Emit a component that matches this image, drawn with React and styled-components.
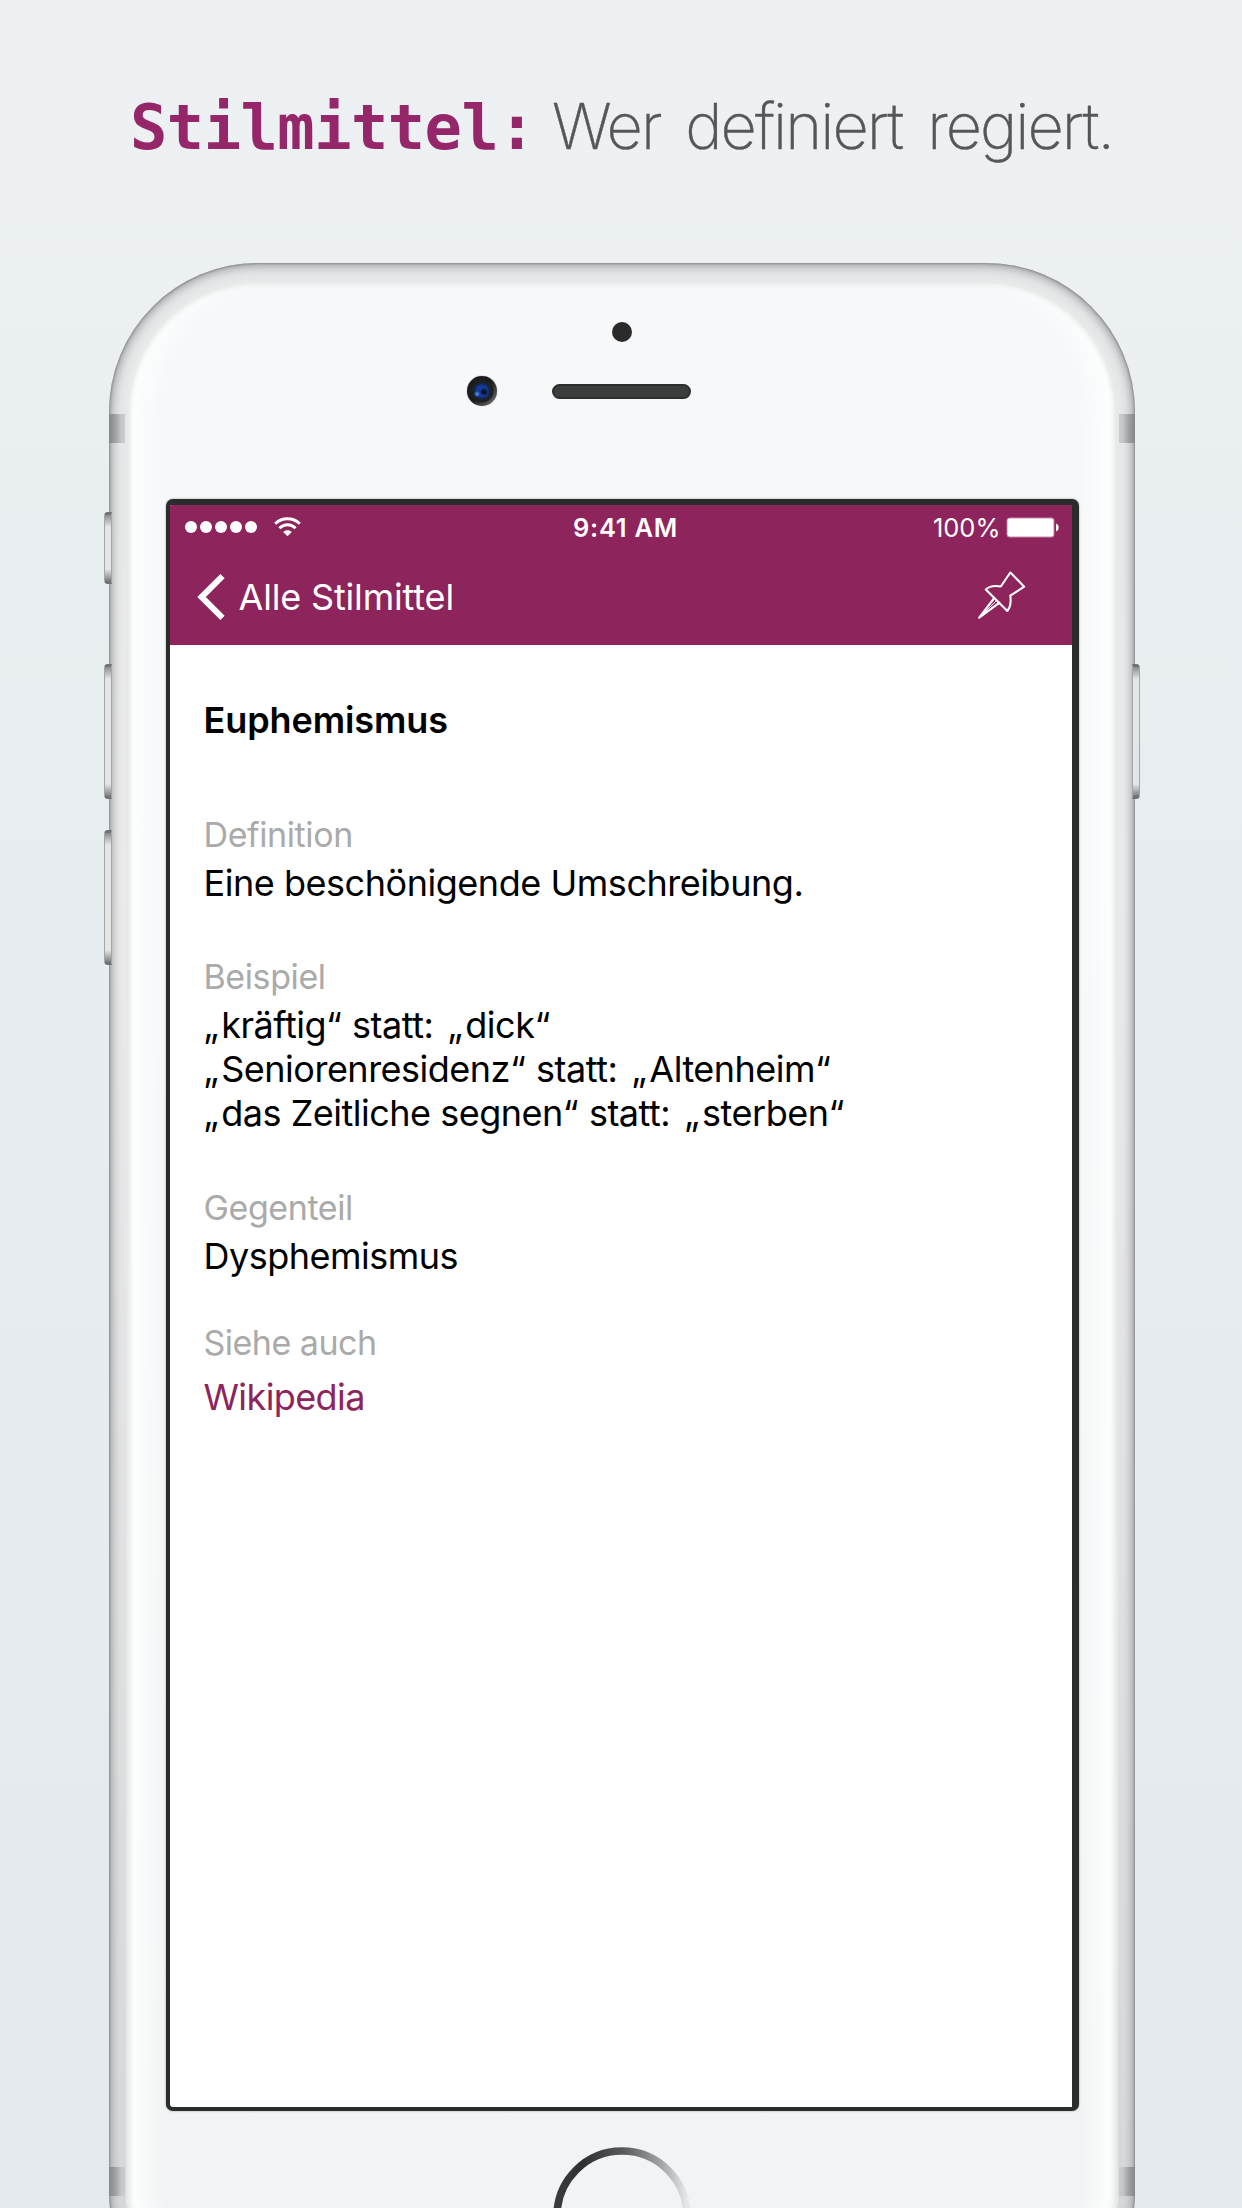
import React from "react";
import styled, { createGlobalStyle } from "styled-components";

const Global = createGlobalStyle`
  * { box-sizing: border-box; }
  html, body { margin: 0; padding: 0; }
  body { font-family: Inter, "Liberation Sans", sans-serif; }
`;

const Page = styled.main`
  width: 1242px;
  height: 2208px;
  overflow: hidden;
  display: flex;
  flex-direction: column;
  align-items: center;
  background: linear-gradient(180deg, #ecf0f3 0%, #edf1f2 10%, #e9eef1 22%, #e7ecf0 55%, #e3e9ec 100%);
`;

const Headline = styled.h1`
  height: 263px;
  width: 100%;
  margin: 0;
  padding: 84px 0 0 130px;
  display: flex;
  align-items: baseline;
  flex: none;
  font-weight: 400;
  line-height: 84px;
  white-space: pre;
`;

const Brand = styled.span`
  font-family: "DejaVu Sans Mono", monospace;
  font-weight: 700;
  font-size: 62px;
  letter-spacing: -0.5px;
  color: #942669;
  width: 422px;
`;

const Claim = styled.span`
  font-family: Inter, sans-serif;
  font-weight: 200;
  font-size: 63px;
  letter-spacing: -1.95px;
  word-spacing: 9px;
  color: #555756;
  -webkit-text-stroke: 0.4px #555756;
`;

const Phone = styled.section`
  position: relative;
  flex: none;
  width: 1026px;
  height: 2077px;
  margin-left: 2px;
  padding: 17px;
  border-radius: 149px;
  background: linear-gradient(180deg, #e6e7e8 0%, #ececed 30%, #d5d6d8 100%);
  box-shadow: inset 0 0 2px 1px #8d8f91, inset 0 0 8px 3px #a3a5a8, inset 0 0 16px 2px #d3d5d6;
`;

const Face = styled.div`
  height: 100%;
  border-radius: 132px;
  display: flex;
  flex-direction: column;
  align-items: center;
  background: linear-gradient(180deg, #f6f8fa 0%, #f6f8fa 25%, #f1f3f4 90%);
  box-shadow: inset 0 0 5px 4px #e3e6e5, inset 34px 0 22px -12px #fdfefe, inset -34px 0 22px -12px #fdfefe;
`;

const Sensors = styled.div`
  flex: none;
  height: 219px;
  width: 100%;
  padding-top: 42px;
  display: flex;
  flex-direction: column;
  align-items: center;
`;

const Proximity = styled.i`
  width: 20px;
  height: 20px;
  border-radius: 50%;
  background: #2b2b2c;
`;

const SensorRow = styled.div`
  margin: 34px 0 0 -86px;
  display: flex;
  align-items: center;
  gap: 55px;
`;

const Camera = styled.i`
  width: 30px;
  height: 30px;
  border-radius: 50%;
  background:
    radial-gradient(circle at 10px 18px, #3f86dc 0 1px, transparent 3px),
    radial-gradient(circle at 17px 16px, #0a1430 0 2px, transparent 4px),
    radial-gradient(circle at 50% 50%, #173c97 0 5px, #122a6b 7px, #1e1f20 9px 11px, transparent 12px),
    linear-gradient(135deg, #1c1c1c 50%, #6c6c6c 95%);
  box-shadow: 0 0 1px #444;
`;

const Speaker = styled.i`
  width: 139px;
  height: 15px;
  border-radius: 8px;
  background: #3c3d3d;
  border: 2px solid #2c2e2e;
`;

const Screen = styled.div`
  flex: none;
  width: 913px;
  height: 1612px;
  border: solid #2b2c2c;
  border-width: 6px 7px 4px 4px;
  border-radius: 7px;
  background: #fff;
  overflow: hidden;
  box-shadow: 0 0 2px #8d9091;
`;

const TopBar = styled.header`
  height: 139.5px;
  background: #8e245c;
  color: #fff;
`;

const StatusBar = styled.div`
  height: 44px;
  padding: 0 13px 0 15px;
  display: grid;
  grid-template-columns: 1fr auto 1fr;
  align-items: center;
`;

const StatusGroup = styled.div`
  display: flex;
  align-items: center;
  justify-content: ${(p) => (p.$end ? "flex-end" : "flex-start")};
  gap: ${(p) => p.$gap}px;
  padding-bottom: ${(p) => p.$lift || 0}px;
`;

const Dot = styled.i`
  width: 12px;
  height: 12px;
  border-radius: 50%;
  background: #fff;
`;

const Time = styled.span`
  padding: 1px 0 0 8px;
  font-size: 25.5px;
  font-weight: 600;
  letter-spacing: 0.7px;
`;

const Percent = styled.span`
  padding-top: 1px;
  font-size: 25.5px;
  line-height: 43px;
  letter-spacing: 0;
`;

const NavBar = styled.nav`
  height: 95px;
  padding: 0 46px 0 27px;
  display: flex;
  align-items: center;
  justify-content: space-between;
`;

const Back = styled.a`
  display: flex;
  align-items: center;
  gap: 14px;
  color: inherit;
`;

const BackLabel = styled.span`
  font-size: 36px;
  line-height: 44px;
  letter-spacing: ${(p) => p.$track}px;
`;

const Article = styled.article`
  padding: 53px 34px 0 34px;
`;

const Line = styled.div`
  font-size: ${(p) => p.$size || 36}px;
  line-height: ${(p) => p.$lh || 44}px;
  font-weight: ${(p) => p.$weight || 400};
  letter-spacing: ${(p) => p.$track || 0}px;
  color: ${(p) => p.$color || "#000"};
  white-space: nowrap;
`;

const Title = styled(Line).attrs({ as: "h2", $weight: 600 })`
  margin: 0 0 71px;
`;

const Label = styled(Line).attrs({ as: "h3", $size: 34, $color: "#aaaaaa" })`
  margin: 0 0 ${(p) => p.$gap}px;
`;

const Section = styled.section`
  margin-bottom: ${(p) => p.$after}px;
`;

const Mark = styled.span`
  letter-spacing: ${(p) => p.$space}px;
`;

const Quote = ({ children }) => (
  <>
    <Mark $space={2.6}>„</Mark>
    {children}
    <Mark $space={0.6}>“</Mark>
  </>
);

const Colon = styled.span`
  letter-spacing: 1.8px;
`;

const Antenna = styled.i`
  position: absolute;
  width: 16px;
  height: 29px;
  top: ${(p) => p.$top}px;
  ${(p) => p.$side}: 0;
  background: linear-gradient(${(p) => (p.$side === "left" ? "90deg" : "270deg")}, #85888a, #9fa1a3 40%, #c3c5c6 75%, #cccdce);
`;

const SideButton = styled.i`
  position: absolute;
  width: 8px;
  top: ${(p) => p.$top}px;
  height: ${(p) => p.$height}px;
  ${(p) => p.$side}: -5px;
  border: 1px solid #a3a6a7;
  border-top: 3px solid #6f7172;
  border-bottom: 3px solid #6f7172;
  border-radius: ${(p) => (p.$side === "left" ? "4px 0 0 4px" : "0 4px 4px 0")};
  background: linear-gradient(180deg, #8b8d8e, #e4e6e7 12px calc(100% - 12px), #7b7d7e);
`;

const HomeRing = styled.svg`
  flex: none;
  display: block;
  margin-top: 36px;
`;

const PinIcon = styled.svg`
  margin-bottom: 4px;
`;

const Wifi = () => (
  <svg width="27" height="20" viewBox="0 0 27 20" fill="none" stroke="#fff">
    <path d="M1.2 6.8C8 .1 19 .1 25.8 6.8" strokeWidth="3" />
    <path d="M5.4 11.2c4.6-4.5 11.6-4.5 16.2 0" strokeWidth="3" />
    <path d="M9.2 14.9c2.5-2.3 6.100-2.3 8.600 0L13.500 19.300Z" fill="#fff" stroke="none" />
  </svg>
);

const Battery = () => (
  <svg width="53" height="21" viewBox="0 0 53 21">
    <rect x=".6" y=".6" width="47.800" height="19.800" rx="3.200" fill="#c58aa9" />
    <rect x="1.500" y="1.500" width="46" height="18" rx="2.300" fill="#fff" />
    <path d="M50 6.500c3.600 1.200 3.600 6.800 0 8Z" fill="#fff" />
  </svg>
);

const Chevron = () => (
  <svg width="28" height="46" viewBox="0 0 28 46" fill="none" stroke="#fff" strokeWidth="6">
    <path d="M25.500 2.200 4.500 23l21 20.800" />
  </svg>
);

const Pin = () => (
  <PinIcon width="48" height="48" viewBox="0 0 48 48" fill="none" stroke="#fff" strokeWidth="2.100" strokeLinejoin="round" strokeLinecap="round">
    <path d="M32.300 1.500 46.200 15.700 32.300 24.700c.9 6 .2 11.300-3 15.300L7.800 18.600c3.600-3.700 9-4.200 15-3.100Z" />
    <path d="M16.300 27 1.200 46.700 21.200 31.800" />
    <path d="M18.800 29.300 1.200 46.700" strokeWidth="1" />
  </PinIcon>
);

const examples = [
  ["kräftig", "dick"],
  ["Seniorenresidenz", "Altenheim"],
  ["das Zeitliche segnen", "sterben"],
];

export default function App() {
  return (
    <Page>
      <Global />
      <Headline>
        <Brand>Stilmittel:</Brand>
        <Claim>Wer definiert regiert.</Claim>
      </Headline>
      <Phone>
        <SideButton $side="left" $top={249} $height={72} />
        <SideButton $side="left" $top={401} $height={135} />
        <SideButton $side="left" $top={567} $height={135} />
        <SideButton $side="right" $top={401} $height={135} />
        <Antenna $side="left" $top={151} />
        <Antenna $side="right" $top={151} />
        <Antenna $side="left" $top={1904} />
        <Antenna $side="right" $top={1904} />
        <Face>
          <Sensors>
            <Proximity />
            <SensorRow>
              <Camera />
              <Speaker />
            </SensorRow>
          </Sensors>
          <Screen>
            <TopBar>
              <StatusBar>
                <StatusGroup $gap={17} $lift={1}>
                  <StatusGroup $gap={3.2}>
                    <Dot /><Dot /><Dot /><Dot /><Dot />
                  </StatusGroup>
                  <Wifi />
                </StatusGroup>
                <Time>9:41 AM</Time>
                <StatusGroup $end $gap={5}>
                  <Percent>100%</Percent>
                  <Battery />
                </StatusGroup>
              </StatusBar>
              <NavBar>
                <Back>
                  <Chevron />
                  <BackLabel $track={-0.17}>Alle Stilmittel</BackLabel>
                </Back>
                <Pin />
              </NavBar>
            </TopBar>
            <Article>
              <Title $track={-0.1}>Euphemismus</Title>
              <Section $after={50}>
                <Label $gap={4} $track={-0.4}>Definition</Label>
                <Line $track={-0.46}>Eine beschönigende Umschreibung.</Line>
              </Section>
              <Section $after={51}>
                <Label $gap={4} $track={-0.4}>Beispiel</Label>
                {examples.map(([mild, plain]) => (
                  <Line key={mild} $lh={44} $track={-0.5}>
                    <Quote>{mild}</Quote> statt<Colon>: </Colon><Quote>{plain}</Quote>
                  </Line>
                ))}
              </Section>
              <Section $after={43}>
                <Label $gap={4.5} $track={-0.4}>Gegenteil</Label>
                <Line $track={-0.5}>Dysphemismus</Line>
              </Section>
              <Section $after={0}>
                <Label $gap={10} $track={-0.5}>Siehe auch</Label>
                <Line $color="#8e245c" $track={-0.6}>Wikipedia</Line>
              </Section>
            </Article>
          </Screen>
          <HomeRing width="138" height="138" viewBox="0 0 138 138" fill="none">
            <defs>
              <linearGradient id="ring" x1="0" y1="0" x2="1" y2="0">
                <stop offset="0" stopColor="#3a3b3d" />
                <stop offset=".2" stopColor="#2f3032" />
                <stop offset=".5" stopColor="#55575a" />
                <stop offset=".8" stopColor="#a2a4a6" />
                <stop offset="1" stopColor="#e6e8e9" />
              </linearGradient>
            </defs>
            <circle cx="69" cy="69" r="65" stroke="url(#ring)" strokeWidth="7.500" />
          </HomeRing>
        </Face>
      </Phone>
    </Page>
  );
}
